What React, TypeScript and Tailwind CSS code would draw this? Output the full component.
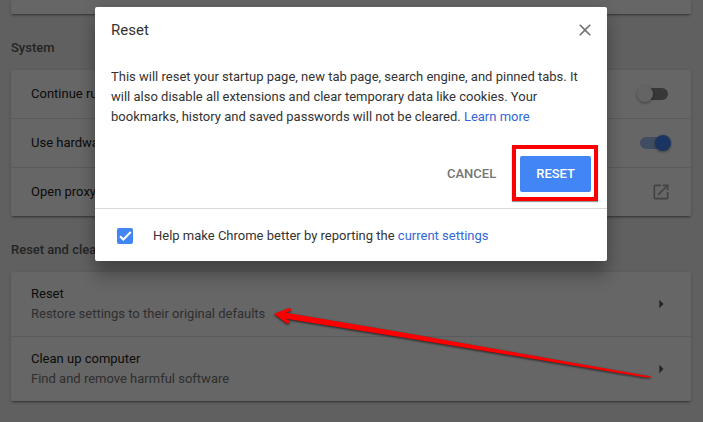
import { useState } from "react";
import type { ReactNode } from "react";
import clsx from "clsx";

function SectionTitle({ children }: { children: ReactNode }) {
  return (
    <h2 className="pt-6 pb-3 text-[13px] leading-5 font-medium text-[#5a5a5a]">
      {children}
    </h2>
  );
}

function Card({ children }: { children: ReactNode }) {
  return (
    <div className="divide-y divide-[#e4e4e4] rounded-[2px] bg-white shadow-[0_2px_2px_0_rgba(0,0,0,0.14),0_1px_5px_0_rgba(0,0,0,0.12),0_3px_1px_-2px_rgba(0,0,0,0.2)]">
      {children}
    </div>
  );
}

interface ToggleRowProps {
  label: string;
  initial: boolean;
}

function ToggleRow({ label, initial }: ToggleRowProps) {
  const [on, setOn] = useState(initial);

  return (
    <label className="flex items-center justify-between px-5 py-3.5">
      <span>{label}</span>
      <input
        type="checkbox"
        checked={on}
        onChange={(e) => setOn(e.target.checked)}
        className={clsx(
          "relative mr-[3px] h-3 w-7 appearance-none rounded-full before:absolute before:-top-0.5 before:size-4 before:rounded-full before:shadow-[0_1px_3px_rgba(0,0,0,0.4)]",
          on
            ? "bg-[#a0bdf3] before:-right-[3px] before:bg-[#4285f4]"
            : "bg-[#8c8c8c] before:-left-[3px] before:bg-[#fafafa]",
        )}
      />
    </label>
  );
}

interface LinkRowProps {
  title: string;
  detail: string;
}

function LinkRow({ title, detail }: LinkRowProps) {
  return (
    <button
      type="button"
      className="flex w-full items-center justify-between px-5 py-3 text-left"
    >
      <span>
        <span className="block">{title}</span>
        <span className="block text-[#757575]">{detail}</span>
      </span>
      <svg viewBox="0 0 24 24" className="size-5 fill-[#5a5a5a]">
        <path d="M10 7l5 5-5 5z" />
      </svg>
    </button>
  );
}

function ResetDialog() {
  const [report, setReport] = useState(true);

  return (
    <div
      role="dialog"
      aria-modal="true"
      aria-labelledby="reset-title"
      className="mx-auto w-full max-w-lg rounded-[2px] bg-white text-[#333] shadow-[0_0_16px_rgba(0,0,0,0.12),0_16px_16px_rgba(0,0,0,0.24)]"
    >
      <div className="flex items-center justify-between px-4 pt-[11px] pb-[25px]">
        <h1 id="reset-title" className="text-[15px] leading-6">
          Reset
        </h1>
        <button type="button" aria-label="Close" className="-mr-1">
          <svg viewBox="0 0 24 24" className="size-5 fill-[#757575]">
            <path d="M19 6.41L17.59 5 12 10.59 6.41 5 5 6.41 10.59 12 5 17.59 6.41 19 12 13.41 17.59 19 19 17.59 13.41 12z" />
          </svg>
        </button>
      </div>

      <p className="px-4">
        This will reset your startup page, new tab page, search engine, and
        pinned tabs. It will also disable all extensions and clear temporary
        data like cookies. Your bookmarks, history and saved passwords will not
        be cleared.{" "}
        <a href="#learn-more" className="text-[#3367d6]">
          Learn more
        </a>
      </p>

      <div className="flex justify-end gap-2 px-4 pt-[29px] pb-4 font-medium">
        <button type="button" className="h-9 px-4 text-[#757575]">
          CANCEL
        </button>
        <div className="relative">
          <button
            type="button"
            className="h-9 rounded-[2px] bg-[#4285f4] px-4 text-white"
          >
            RESET
          </button>
          {/* Highlight box */}
          <span className="pointer-events-none absolute -top-[11px] -right-[7px] -bottom-[9px] -left-2 border-4 border-[#fa0000] shadow-[0_1px_1px_rgba(0,0,0,0.4)]" />
        </div>
      </div>

      {/* Footer */}
      <div className="flex items-center gap-5 border-t border-[#d9d9d9] pt-[17px] pr-4 pb-[15px] pl-[22px]">
        <span className="relative size-4">
          <input
            id="report"
            type="checkbox"
            checked={report}
            onChange={(e) => setReport(e.target.checked)}
            className="block size-4 appearance-none rounded-[2px] border-2 border-[#4285f4] checked:bg-[#4285f4]"
          />
          {report && (
            <svg
              viewBox="0 0 16 16"
              className="pointer-events-none absolute inset-0 size-4 fill-none stroke-white stroke-2"
            >
              <path d="M3 8.2l3.3 3.3L13.8 4" />
            </svg>
          )}
        </span>
        <p>
          <label htmlFor="report">
            Help make Chrome better by reporting the{" "}
          </label>
          <a href="#current-settings" className="text-[#3367d6]">
            current settings
          </a>
        </p>
      </div>
    </div>
  );
}

export default function App() {
  return (
    <div className="relative min-h-screen bg-[#f1f1f1] font-['Roboto',sans-serif] text-[13px] leading-5 text-[#212121]">
      <main className="pr-px pb-5">
        <div className="mx-auto max-w-[680px]">
          <Card>
            <div className="h-3.5" />
          </Card>

          <SectionTitle>System</SectionTitle>
          <Card>
            <ToggleRow
              label="Continue running background apps when Google Chrome is closed"
              initial={false}
            />
            <ToggleRow
              label="Use hardware acceleration when available"
              initial={true}
            />
            <button
              type="button"
              className="flex w-full items-center justify-between px-5 py-3.5"
            >
              <span>Open proxy settings</span>
              <svg viewBox="0 0 24 24" className="size-5 fill-[#a8a8a8]">
                <path d="M19 19H5V5h7V3H5c-1.11 0-2 .9-2 2v14c0 1.1.89 2 2 2h14c1.1 0 2-.9 2-2v-7h-2v7zM14 3v2h3.59l-9.83 9.83 1.41 1.41L19 6.41V10h2V3h-7z" />
              </svg>
            </button>
          </Card>

          <SectionTitle>Reset and clean up</SectionTitle>
          <Card>
            <LinkRow
              title="Reset"
              detail="Restore settings to their original defaults"
            />
            <LinkRow
              title="Clean up computer"
              detail="Find and remove harmful software"
            />
          </Card>
        </div>
      </main>

      {/* Backdrop and dialog */}
      <div className="absolute inset-0 bg-black/60 pt-[7px] pr-px">
        <ResetDialog />
      </div>

      {/* Arrow pointing at the reset row */}
      <svg
        viewBox="0 0 380 74"
        className="pointer-events-none absolute top-[306px] left-[273px] h-[74px] w-[380px] fill-[#fa0000] drop-shadow-[0_1px_1px_rgba(0,0,0,0.7)]"
      >
        <path d="M1 8L16 2L18 3L18 4.5L13 6.8L127 26L378 70.5L378 71.5L370 71L127 31L13 12.8L16.5 15L16 17L14 17.5Z" />
      </svg>
    </div>
  );
}
